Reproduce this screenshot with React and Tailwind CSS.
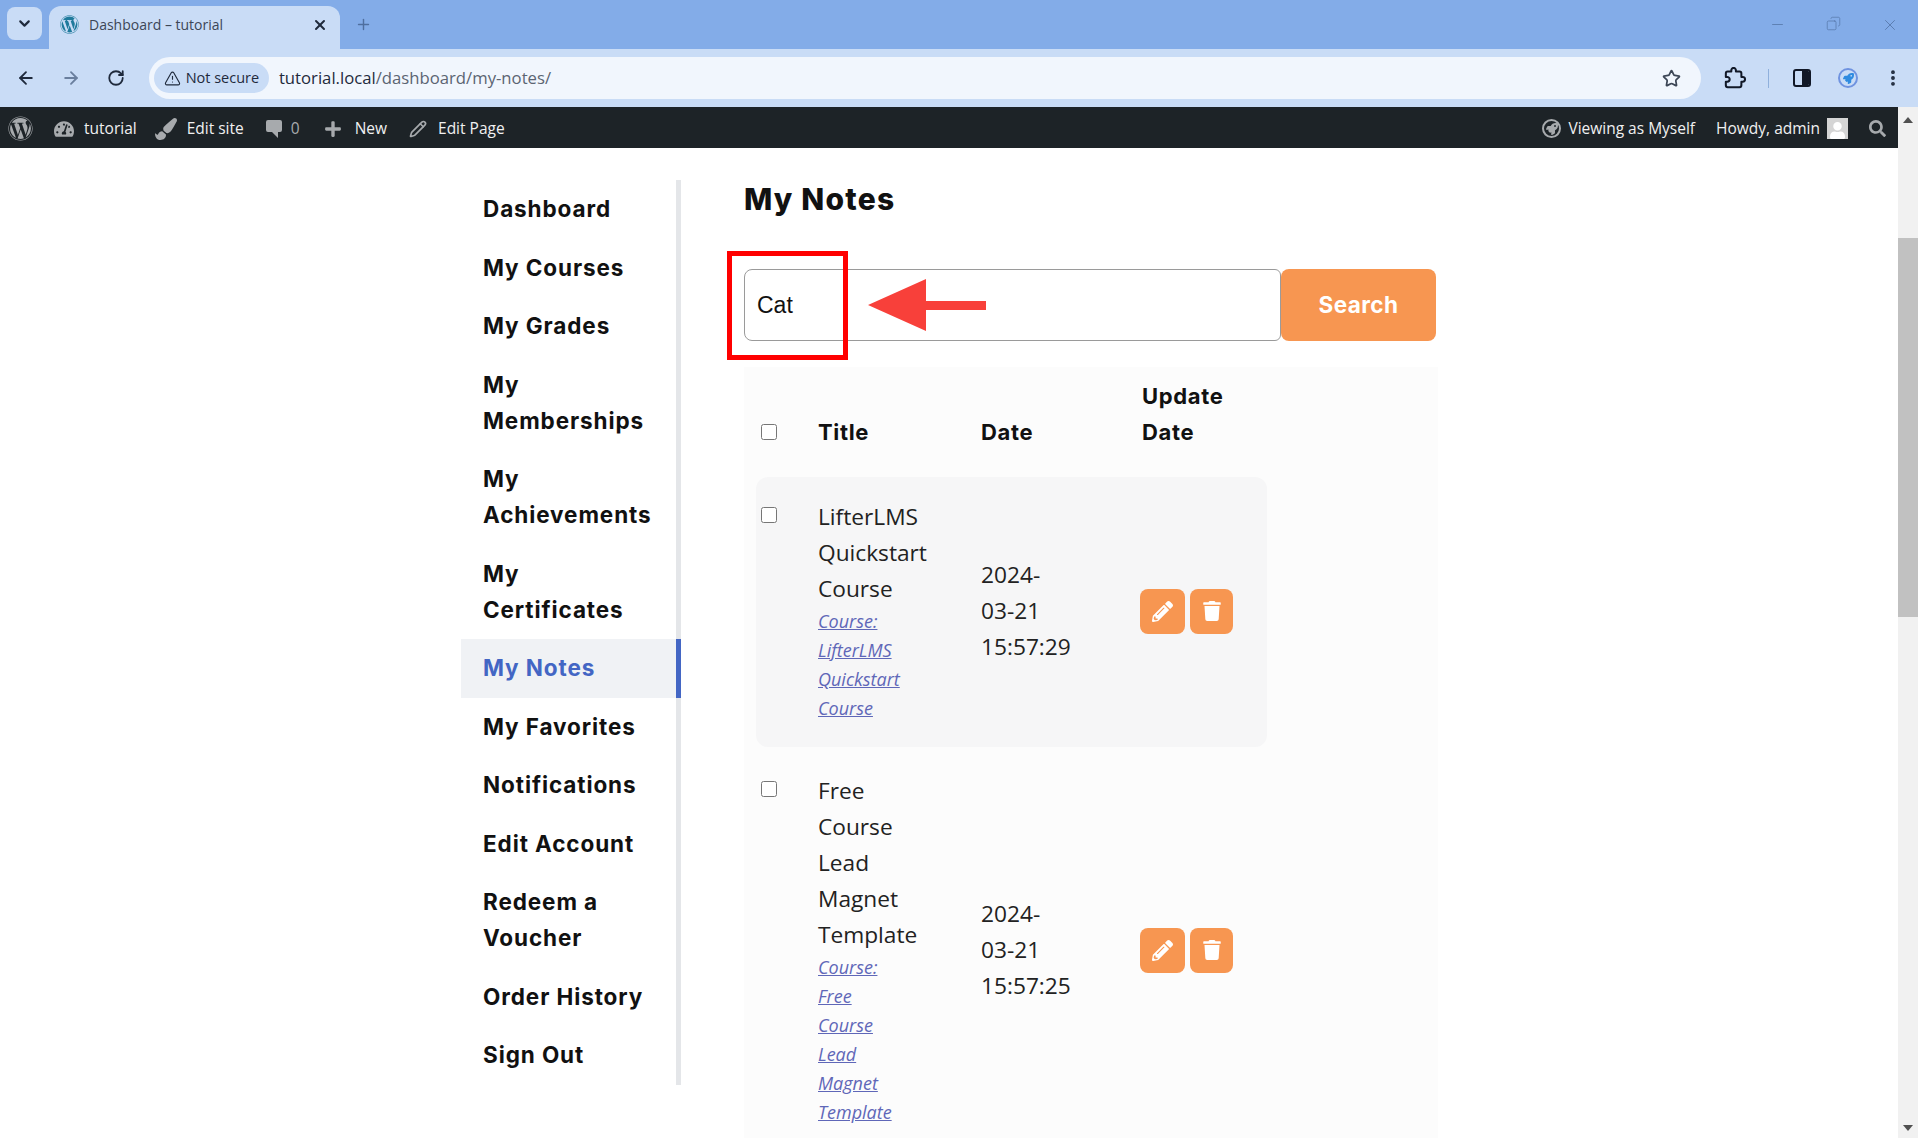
import { ArrowLeft, ArrowRight, ChevronDown, Copy, EllipsisVertical, Minus, Pencil, Plus, RotateCw, Star, TriangleAlert, X } from "lucide-react";
import { FaPaintBrush, FaPencilAlt, FaPlus, FaRocket, FaSearch, FaTachometerAlt, FaTrash, FaUser, FaWordpress } from "react-icons/fa";

const heading = "font-['Inter',sans-serif] font-bold";
const body = "font-['Open_Sans',sans-serif]";

const menu = [
  ["Dashboard"],
  ["My Courses"],
  ["My Grades"],
  ["My", "Memberships"],
  ["My", "Achievements"],
  ["My", "Certificates"],
  ["My Notes"],
  ["My Favorites"],
  ["Notifications"],
  ["Edit Account"],
  ["Redeem a", "Voucher"],
  ["Order History"],
  ["Sign Out"],
];

const notes = [
  {
    title: ["LifterLMS", "Quickstart", "Course"],
    course: ["Course:", "LifterLMS", "Quickstart", "Course"],
    date: ["2024-", "03-21", "15:57:29"],
    shade: true,
  },
  {
    title: ["Free", "Course", "Lead", "Magnet", "Template"],
    course: ["Course:", "Free", "Course", "Lead", "Magnet", "Template"],
    date: ["2024-", "03-21", "15:57:25"],
    shade: false,
  },
];

function BrowserChrome() {
  return (
    <div className={`${body} shrink-0`}>
      <div className="flex h-[49px] bg-[#83ace8]">
        <div className="ml-[7px] mt-[7px] flex h-[33px] w-[35px] items-center justify-center rounded-lg bg-[#c9dcf6]">
          <ChevronDown size={17} strokeWidth={3} className="text-[#1f2a3c]" />
        </div>
        <div className="ml-[7px] mt-[6px] flex h-[43px] w-[291px] items-center rounded-t-xl bg-[#c9dcf6] pb-[6px] pl-[11px] pr-[12px]">
          <FaWordpress size={19} className="text-[#1f7a9c]" />
          <span className="ml-[10px] flex-1 text-[14px] text-[#3c4656]">Dashboard – tutorial</span>
          <X size={16} strokeWidth={3} className="text-[#1f2a3c]" />
        </div>
        <Plus size={17} strokeWidth={2} className="ml-[15px] mt-[16px] text-[#4f6f9f]" />
        <div className="ml-auto mr-[19px] mt-[16px] flex gap-[40px] text-[#4f6f9f]">
          <Minus size={17} strokeWidth={1} />
          <Copy size={15} strokeWidth={1} className="-scale-x-100" />
          <X size={18} strokeWidth={1} />
        </div>
      </div>
      <div className="flex h-[58px] items-center bg-[#c9dcf6] pl-[16px] pr-[15px]">
        <ArrowLeft size={20} strokeWidth={2.2} className="text-[#1f2a3c]" />
        <ArrowRight size={20} strokeWidth={2.2} className="ml-[25px] text-[#6a7f9e]" />
        <RotateCw size={18} strokeWidth={2.4} className="ml-[26px] text-[#1f2a3c]" />
        <div className="ml-[24px] flex h-[42px] w-[1555px] items-center rounded-full bg-[#f1f6fd] pl-[5px] pr-[20px]">
          <div className="flex h-[30px] w-[115px] items-center justify-center gap-[5px] rounded-full bg-[#c9dcf6] text-[14.5px] text-[#1f2a3c]">
            <TriangleAlert size={17} strokeWidth={1.6} />
            <span>Not secure</span>
          </div>
          <span className="ml-[10px] flex-1 text-[16.7px] text-[#1f2a3c]">
            tutorial.local<span className="text-[#5b6472]">/dashboard/my-notes/</span>
          </span>
          <Star size={19} strokeWidth={2.2} className="text-[#3c4656]" />
        </div>
        <svg className="ml-[23px] text-[#111827]" width="22" height="22" viewBox="0 0 24 24" fill="none" stroke="currentColor" strokeWidth="2.2" strokeLinejoin="round">
          <path d="M20.5 11H19V7c0-1.1-.9-2-2-2h-4V3.5C13 2.12 11.88 1 10.5 1S8 2.12 8 3.5V5H4c-1.1 0-1.99.9-1.99 2v3.8H3.5c1.49 0 2.7 1.21 2.7 2.7s-1.21 2.7-2.7 2.7H2V20c0 1.1.9 2 2 2h13c1.1 0 2-.9 2-2v-4h1.5c1.38 0 2.5-1.12 2.5-2.5S21.88 11 20.5 11z" />
        </svg>
        <div className="ml-[22px] h-[19px] w-px bg-[#8fb0dc]" />
        <div className="ml-[24px] flex h-[18px] w-[18px] overflow-hidden rounded-[3px] border-2 border-[#111827]">
          <div className="w-1/2" />
          <div className="w-1/2 bg-[#111827]" />
        </div>
        <div className="ml-[27px] flex h-[20px] w-[20px] items-center justify-center rounded-full border-2 border-[#6f93e0]">
          <FaRocket size={11} className="text-[#2f8be0]" />
        </div>
        <EllipsisVertical size={20} strokeWidth={2.6} className="ml-[25px] text-[#1f2a3c]" />
      </div>
    </div>
  );
}

function AdminBar() {
  return (
    <div className={`${body} flex h-[41px] shrink-0 items-center bg-[#1d2327] pl-[8px] pt-[2px] text-[15.5px] text-[#f0f0f1]`}>
      <FaWordpress size={25} className="text-[#a7aaad]" />
      <FaTachometerAlt size={20} className="ml-[21px] text-[#a7aaad]" />
      <span className="ml-[10px]">tutorial</span>
      <FaPaintBrush size={22} className="ml-[18px] text-[#a7aaad]" />
      <span className="ml-[10px]">Edit site</span>
      <svg className="ml-[21px] text-[#a7aaad]" width="18" height="20" viewBox="0 0 18 20" fill="currentColor">
        <path d="M3 1h12a2 2 0 0 1 2 2v8a2 2 0 0 1-2 2h-2v6l-6-6H3a2 2 0 0 1-2-2V3a2 2 0 0 1 2-2z" />
      </svg>
      <span className="ml-[8px] text-[#a7aaad]">0</span>
      <FaPlus size={18} className="ml-[24px] text-[#a7aaad]" />
      <span className="ml-[13px]">New</span>
      <Pencil size={18} strokeWidth={2.2} className="ml-[22px] text-[#a7aaad]" />
      <span className="ml-[11px]">Edit Page</span>
      <div className="ml-auto flex items-center">
        <div className="flex h-[19px] w-[19px] items-center justify-center rounded-full border-2 border-[#a7aaad]">
          <FaRocket size={12} className="text-[#a7aaad]" />
        </div>
        <span className="ml-[7px]">Viewing as Myself</span>
        <span className="ml-[21px]">Howdy, admin</span>
        <div className="ml-[7px] flex h-[21px] w-[21px] items-end justify-center overflow-hidden bg-[#d5d5d5]">
          <FaUser size={17} className="text-white" />
        </div>
        <FaSearch size={17} className="ml-[21px] mr-[12px] text-[#a7aaad]" />
      </div>
    </div>
  );
}

function Sidebar() {
  return (
    <nav className={`${heading} mt-[32px] ml-[461px] h-fit w-[220px] shrink-0 border-r-[5px] border-[#e4e6e9] text-[22.5px] leading-[36px] tracking-[0.04em] text-[#111]`}>
      {menu.map((lines) => {
        const active = lines[0] === "My Notes";
        return (
          <div
            key={lines.join(" ")}
            className={active ? "relative bg-[#f0f2f5] py-[11.25px] pl-[22px] text-[#4366c4]" : "py-[11.25px] pl-[22px]"}
          >
            {lines.map((l) => (
              <div key={l}>{l}</div>
            ))}
            {active && <div className="absolute -right-[5px] top-0 h-full w-[5px] bg-[#4366c4]" />}
          </div>
        );
      })}
    </nav>
  );
}

function NoteRow({ note }) {
  return (
    <div className={`ml-[12px] flex w-[511px] items-center rounded-xl pb-[24px] pt-[22px] ${note.shade ? "bg-[#f6f6f7]" : "mt-[4px]"}`}>
      <div className="w-[62px] self-start pl-[5px] pt-[8px]">
        <input type="checkbox" className="block h-[16px] w-[16px]" />
      </div>
      <div className="w-[163px]">
        <div className="text-[22.7px] leading-[36px] text-[#222]">
          {note.title.map((l) => (
            <div key={l}>{l}</div>
          ))}
        </div>
        <div className="text-[18px] leading-[29px] text-[#5f67b8] italic underline">
          {note.course.map((l, i) => (
            <div key={i}>{l}</div>
          ))}
        </div>
      </div>
      <div className="w-[159px] text-[22.7px] leading-[36px] text-[#222]">
        {note.date.map((l) => (
          <div key={l}>{l}</div>
        ))}
      </div>
      <div className="flex gap-[5px]">
        <div className="flex h-[45px] w-[45px] items-center justify-center rounded-lg bg-[#f79651] text-white">
          <FaPencilAlt size={21} />
        </div>
        <div className="flex h-[45px] w-[43px] items-center justify-center rounded-lg bg-[#f79651] text-white">
          <FaTrash size={20} />
        </div>
      </div>
    </div>
  );
}

function Notes() {
  return (
    <main className="ml-[63px] w-[694px] shrink-0">
      <h1 className={`${heading} mt-[31px] text-[30px] font-extrabold leading-[40px] tracking-[0.04em] text-[#111]`}>My Notes</h1>
      <div className="relative mt-[50px] flex h-[72px] w-[692px]">
        <input
          defaultValue="Cat"
          className="h-full w-[537px] rounded-l-lg rounded-r-md border border-[#9a9a9a] bg-white pl-[12px] font-['Liberation_Sans',sans-serif] text-[23px] text-[#111] outline-none"
        />
        <button className={`${heading} h-full flex-1 rounded-lg bg-[#f79651] text-[22.5px] tracking-[0.02em] text-white`}>Search</button>
        <div className="absolute -left-[17px] -top-[18px] h-[109px] w-[121px] border-[5px] border-[#f00]" />
        <svg className="absolute left-[124px] top-[10px]" width="118" height="52" viewBox="0 0 118 52">
          <path d="M0 26 L58 0 V22 H118 V31 H58 V52 Z" fill="#f8403a" />
        </svg>
      </div>
      <div className={`${body} mt-[26px] bg-[#fcfcfc] pb-[20px]`}>
        <div className={`${heading} ml-[12px] flex h-[110px] items-end pb-[27px] text-[22px] leading-[36px] tracking-[0.03em] text-[#111]`}>
          <div className="flex h-[36px] w-[62px] items-center pl-[5px]">
            <input type="checkbox" className="block h-[16px] w-[16px]" />
          </div>
          <div className="w-[163px]">Title</div>
          <div className="w-[161px]">Date</div>
          <div>
            <div>Update</div>
            <div>Date</div>
          </div>
        </div>
        {notes.map((n) => (
          <NoteRow key={n.date[2]} note={n} />
        ))}
      </div>
    </main>
  );
}

function Scrollbar() {
  return (
    <div className="flex w-[20px] shrink-0 flex-col items-center bg-[#f1f1f1]">
      <div className="mt-[10px] h-0 w-0 border-x-[5px] border-b-[6px] border-x-transparent border-b-[#505050]" />
      <div className="mt-[115px] h-[379px] w-full bg-[#c1c1c1]" />
      <div className="mt-auto mb-[7px] h-0 w-0 border-x-[5px] border-t-[6px] border-x-transparent border-t-[#505050]" />
    </div>
  );
}

export default function App() {
  return (
    <div className="flex h-[1138px] w-[1918px] flex-col overflow-hidden bg-white">
      <BrowserChrome />
      <div className="flex flex-1 overflow-hidden">
        <div className="flex min-w-0 flex-1 flex-col">
          <AdminBar />
          <div className="flex flex-1 overflow-hidden">
            <Sidebar />
            <Notes />
          </div>
        </div>
        <Scrollbar />
      </div>
    </div>
  );
}
